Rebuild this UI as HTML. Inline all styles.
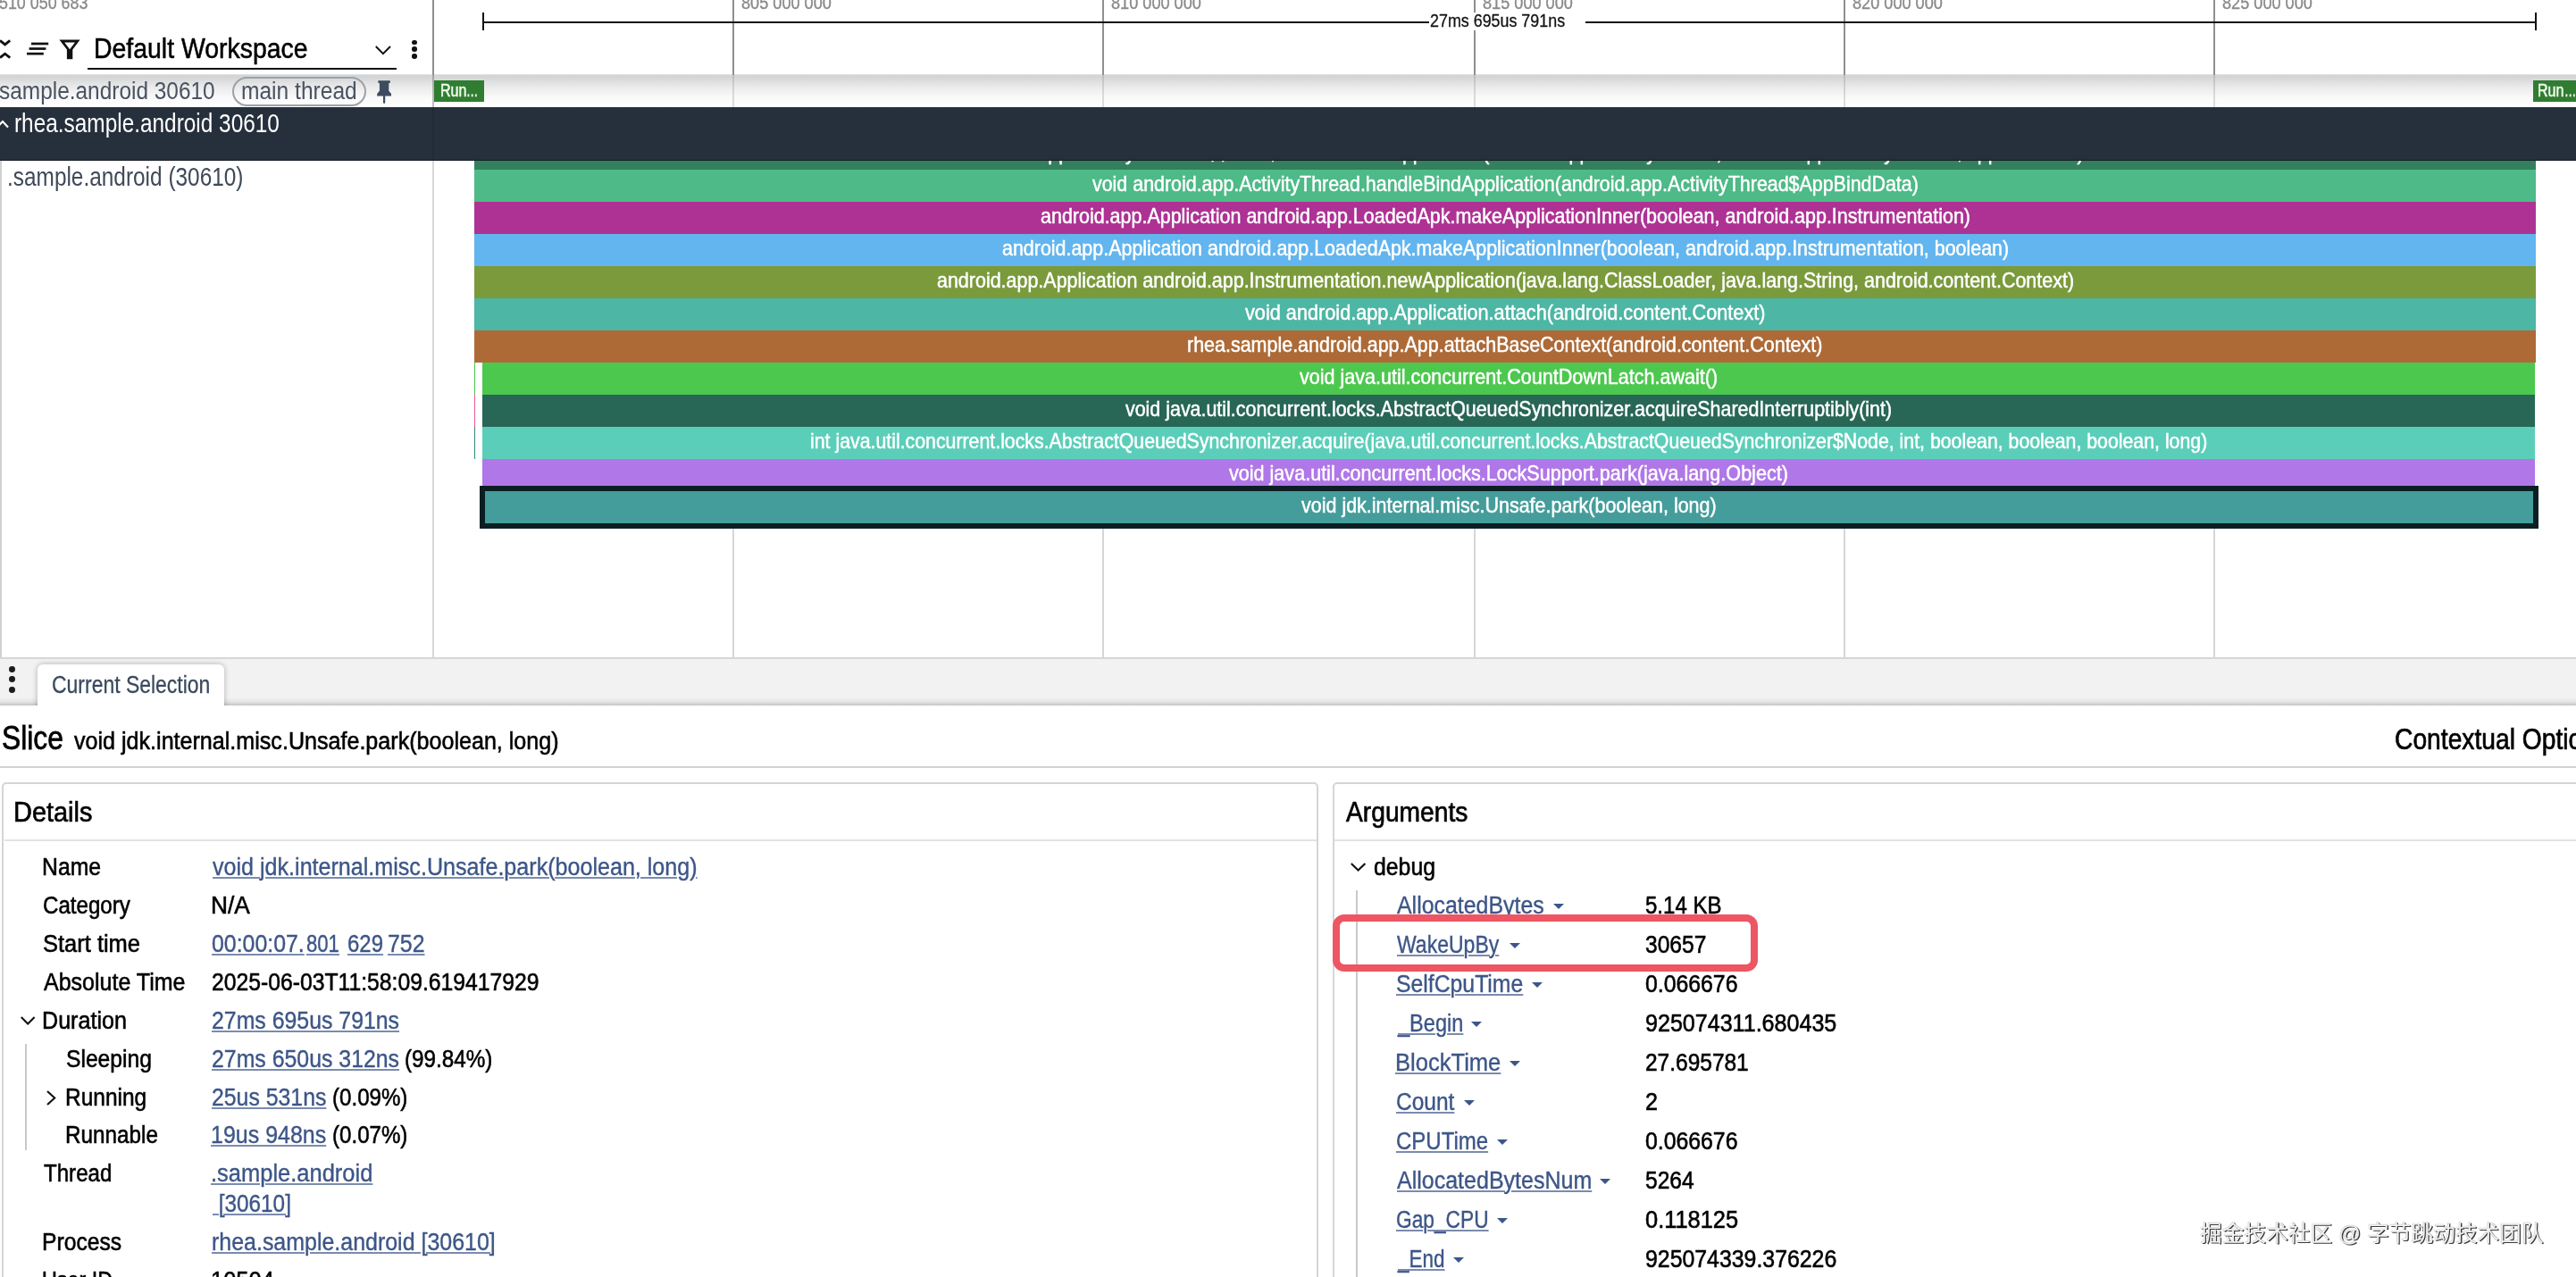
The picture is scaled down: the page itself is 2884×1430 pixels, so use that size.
<!DOCTYPE html>
<html lang="en">
<head>
<meta charset="utf-8">
<title>Perfetto UI - Slice details</title>
<style>
html,body{margin:0;padding:0;background:#fff;}
body{width:2884px;height:1430px;position:relative;overflow:hidden;font-family:"Liberation Sans",sans-serif;}
#page{position:absolute;left:0;top:0;width:2884px;height:1430px;overflow:hidden;will-change:transform;}
.t{position:absolute;white-space:pre;line-height:1;transform-origin:0 0;font-family:"Liberation Sans",sans-serif;z-index:2;}
.u{text-decoration:underline;text-decoration-thickness:1.7px;text-underline-offset:2.3px;text-decoration-color:#7b8bad;}
.z1{z-index:1}.z2{z-index:2}.z3{z-index:6}.z5{z-index:9}
.b{position:absolute;}
.s{position:absolute;z-index:1;}
.grid{position:absolute;width:2px;z-index:0;}
.dd{position:absolute;width:0;height:0;border-left:6px solid transparent;border-right:6px solid transparent;border-top:6.6px solid #3d5688;z-index:6;}
.dd.z5{z-index:9}
svg{position:absolute;overflow:visible;}
</style>
</head>
<body>
<div id="page">

<!-- ===== time axis gridlines (top ruler part) ===== -->
<div class="grid" style="left:820px;top:0;height:84px;background:#8f8f8f;z-index:2"></div>
<div class="grid" style="left:1234px;top:0;height:84px;background:#8f8f8f;z-index:2"></div>
<div class="grid" style="left:1650px;top:0;height:84px;background:#8f8f8f;z-index:2"></div>
<div class="grid" style="left:2064px;top:0;height:84px;background:#8f8f8f;z-index:2"></div>
<div class="grid" style="left:2478px;top:0;height:84px;background:#8f8f8f;z-index:2"></div>
<!-- gridlines in track area -->
<div class="grid" style="left:820px;top:180px;height:556px;background:#d6d6d6"></div>
<div class="grid" style="left:1234px;top:180px;height:556px;background:#d6d6d6"></div>
<div class="grid" style="left:1650px;top:180px;height:556px;background:#d6d6d6"></div>
<div class="grid" style="left:2064px;top:180px;height:556px;background:#d6d6d6"></div>
<div class="grid" style="left:2478px;top:180px;height:556px;background:#d6d6d6"></div>

<!-- panel separator -->
<div class="b" style="left:484px;top:0;width:2px;height:83.5px;background:#8e8e8e;z-index:2"></div>
<div class="b" style="left:484px;top:180px;width:2px;height:556px;background:#d7d7d7;z-index:1"></div>

<!-- ===== selection span ruler ===== -->
<div class="b" style="left:541px;top:23.5px;width:2298px;height:2px;background:#111;z-index:2"></div>
<div class="b" style="left:540px;top:14px;width:2px;height:19.5px;background:#111;z-index:2"></div>
<div class="b" style="left:2838px;top:14px;width:2px;height:19.5px;background:#111;z-index:2"></div>
<div class="b" style="left:1600px;top:13.6px;width:175px;height:20.4px;background:#fff;z-index:3"></div>

<!-- ===== toolbar icons ===== -->
<svg style="left:-2px;top:43px;z-index:2" width="16" height="24" viewBox="0 0 16 24">
  <path d="M2 2.4 L7.6 6.9 L13.2 2.4" fill="none" stroke="#111" stroke-width="2.8"/>
  <path d="M2 21.6 L7.6 17.2 L13.2 21.6" fill="none" stroke="#111" stroke-width="2.8"/>
</svg>
<svg style="left:29px;top:46px;z-index:2" width="27" height="17" viewBox="0 0 27 17">
  <rect x="6" y="1.6" width="19.2" height="2.7" fill="#111"/>
  <rect x="3.6" y="7.2" width="18.8" height="2.7" fill="#111"/>
  <rect x="1" y="12.8" width="18.8" height="2.7" fill="#111"/>
</svg>
<svg style="left:66px;top:43.5px;z-index:2" width="24" height="23" viewBox="0 0 24 23">
  <path d="M0.4 0.5 H23.6 L15.3 11.6 V22.3 H8.9 V11.6 Z M6.2 3.4 L12.1 11.2 L18 3.4 Z" fill="#111" fill-rule="evenodd"/>
</svg>
<div class="b" style="left:98.2px;top:76px;width:346px;height:2.2px;background:#111;z-index:2"></div>
<svg style="left:420px;top:51px;z-index:2" width="18" height="11" viewBox="0 0 18 11">
  <path d="M0.8 1 L8.9 9.2 L17 1" fill="none" stroke="#111" stroke-width="2"/>
</svg>
<div class="b" style="left:461.4px;top:44.8px;width:5.6px;height:5.6px;border-radius:50%;background:#111;z-index:2"></div>
<div class="b" style="left:461.4px;top:52.4px;width:5.6px;height:5.6px;border-radius:50%;background:#111;z-index:2"></div>
<div class="b" style="left:461.4px;top:60.0px;width:5.6px;height:5.6px;border-radius:50%;background:#111;z-index:2"></div>

<!-- ===== pinned track row ===== -->
<div class="b" style="left:0;top:83px;width:2884px;height:37px;background:linear-gradient(#ececed 0px,#d2d4d6 1.2px,#d4d5d7 3px,#d7d8da 5px,#dfe0e1 9px,#e8e8e9 13px,#eeeeee 17px,#f3f3f3 21px,#f8f8f8 25px,#fbfbfb 29px,#fefefe 37px);z-index:1"></div>
<div class="b" style="left:484px;top:83.5px;width:2px;height:36.5px;background:rgba(100,100,100,.42);z-index:1"></div>
<div class="b" style="left:820px;top:84px;width:2px;height:36px;background:rgba(120,120,120,.24);z-index:1"></div>
<div class="b" style="left:1234px;top:84px;width:2px;height:36px;background:rgba(120,120,120,.24);z-index:1"></div>
<div class="b" style="left:1650px;top:84px;width:2px;height:36px;background:rgba(120,120,120,.24);z-index:1"></div>
<div class="b" style="left:2064px;top:84px;width:2px;height:36px;background:rgba(120,120,120,.24);z-index:1"></div>
<div class="b" style="left:2478px;top:84px;width:2px;height:36px;background:rgba(120,120,120,.24);z-index:1"></div>
<div class="b" style="left:260px;top:86px;width:146px;height:28.6px;border:2px solid #9da1a7;border-radius:17px;z-index:2"></div>
<svg style="left:421px;top:90px;z-index:2" width="18" height="27" viewBox="0 0 18 27">
  <path d="M2.4 0.3 H15.8 V2.9 H14.3 V11.8 L17 15 V17.4 H10.2 V25 L9.1 26.3 L8 25 V17.4 H1.2 V15 L3.9 11.8 V2.9 H2.4 Z" fill="#3e4b5f"/>
</svg>
<div class="b" style="left:486.2px;top:90.4px;width:55.4px;height:23.2px;background:#2f7d31;z-index:2"></div>
<div class="b" style="left:2836px;top:90.4px;width:48px;height:23.2px;background:#2f7d31;z-index:2"></div>

<!-- ===== process group header (dark) ===== -->
<div class="b" style="left:0;top:120px;width:2884px;height:59.6px;background:#262f3c;z-index:2"></div>
<div class="b" style="left:484px;top:120px;width:2px;height:59.6px;background:#222a36;z-index:2"></div>
<div class="b" style="left:0;top:178.8px;width:2884px;height:1.2px;background:#161c25;z-index:2"></div>
<svg style="left:-6px;top:134px;z-index:3" width="16" height="11" viewBox="0 0 16 11">
  <path d="M2 9.4 L9 2 L15 8.6" fill="none" stroke="#fff" stroke-width="2.2"/>
</svg>

<!-- ===== track shell left border ===== -->
<div class="b" style="left:0;top:180px;width:2px;height:556px;background:#d0d0d0;z-index:1"></div>

<!-- ===== slices ===== -->
<div class="s" style="left:531px;top:179px;width:2308px;height:11px;background:#33805c"></div>
<div class="s" style="left:531px;top:190px;width:2308px;height:36px;background:#4dba87"></div>
<div class="s" style="left:531px;top:226px;width:2308px;height:36px;background:#ad3294"></div>
<div class="s" style="left:531px;top:262px;width:2308px;height:36px;background:#62b5ee"></div>
<div class="s" style="left:531px;top:298px;width:2308px;height:36px;background:#7a9a3c"></div>
<div class="s" style="left:531px;top:334px;width:2308px;height:36px;background:#4db6a4"></div>
<div class="s" style="left:531px;top:370px;width:2308px;height:36px;background:#ad6a37"></div>
<div class="s" style="left:540px;top:406px;width:2298px;height:36px;background:#4dc84f"></div>
<div class="s" style="left:540px;top:442px;width:2298px;height:36px;background:#286655"></div>
<div class="s" style="left:540px;top:478px;width:2298px;height:36px;background:#5bceb9"></div>
<div class="s" style="left:540px;top:514px;width:2298px;height:36px;background:#b077e8"></div>

<div class="b" style="left:531px;top:406px;width:1.4px;height:36px;background:#4dc84f;z-index:1"></div>
<div class="b" style="left:531px;top:442px;width:1.4px;height:36px;background:#e85d9b;z-index:1"></div>
<div class="b" style="left:531px;top:478px;width:1.4px;height:36px;background:#2f8a78;z-index:1"></div>
<div class="b" style="left:537px;top:544px;width:2293px;height:36px;border:6px solid #0b1f23;background:#459d9b;z-index:1"></div>

<!-- ===== bottom drawer ===== -->
<div class="b" style="left:0;top:736px;width:2884px;height:54px;background:#f2f2f2;z-index:4"></div>
<div class="b" style="left:0;top:736px;width:2884px;height:2px;background:#d6d6d6;z-index:4"></div>
<div class="b" style="left:0;top:781px;width:2884px;height:9px;background:linear-gradient(#f1f1f1 0%,#ececec 30%,#e0e0e0 60%,#cfcfcf 85%,#c2c2c2 100%);z-index:4"></div>
<div class="b" style="left:0;top:790px;width:2884px;height:640px;background:#fff;z-index:4"></div>
<div class="b" style="left:0;top:738px;width:400px;height:52px;overflow:hidden;z-index:5"><div class="b" style="left:42px;top:5.6px;width:208.6px;height:60px;background:#fff;border-radius:6px 6px 0 0;box-shadow:0 0 6px rgba(0,0,0,.28)"></div></div>
<div class="b" style="left:10.4px;top:746px;width:6.8px;height:6.8px;border-radius:50%;background:#1c1c1c;z-index:5"></div>
<div class="b" style="left:10.4px;top:757.4px;width:6.8px;height:6.8px;border-radius:50%;background:#1c1c1c;z-index:5"></div>
<div class="b" style="left:10.4px;top:768.8px;width:6.8px;height:6.8px;border-radius:50%;background:#1c1c1c;z-index:5"></div>

<!-- header rule -->
<div class="b" style="left:0;top:858px;width:2884px;height:2px;background:#d2d2d2;z-index:5"></div>

<!-- details card -->
<div class="b" style="left:1.8px;top:875.8px;width:1470px;height:600px;border:2px solid #d5d5d5;border-radius:5px;z-index:5"></div>
<div class="b" style="left:4.8px;top:940.4px;width:1469px;height:1.8px;background:#e2e2e2;z-index:5"></div>
<!-- arguments card -->
<div class="b" style="left:1492.4px;top:875.8px;width:1500px;height:600px;border:2px solid #d5d5d5;border-radius:5px;z-index:5"></div>
<div class="b" style="left:1494.4px;top:940.4px;width:1400px;height:1.8px;background:#e2e2e2;z-index:5"></div>

<!-- tree guide lines -->
<div class="b" style="left:28px;top:1169px;width:2px;height:119px;background:#c9c9c9;z-index:5"></div>
<div class="b" style="left:1518.2px;top:997px;width:2px;height:440px;background:#c9c9c9;z-index:5"></div>

<!-- chevrons -->
<svg style="left:23px;top:1138px;z-index:6" width="17" height="10" viewBox="0 0 17 10">
  <path d="M0.8 0.9 L8.2 8.4 L15.6 0.9" fill="none" stroke="#111" stroke-width="2.1"/>
</svg>
<svg style="left:52.4px;top:1221.4px;z-index:6" width="11" height="17" viewBox="0 0 11 17">
  <path d="M1 0.9 L9.2 8.4 L1 15.9" fill="none" stroke="#111" stroke-width="2.1"/>
</svg>
<svg style="left:1512px;top:966px;z-index:6" width="18" height="10" viewBox="0 0 18 10">
  <path d="M0.8 0.9 L8.6 8.6 L16.4 0.9" fill="none" stroke="#111" stroke-width="2.1"/>
</svg>

<!-- red highlight annotation -->
<div class="b" style="left:1492px;top:1024px;width:460px;height:48px;border:8px solid #ed5662;border-radius:13px;z-index:9"></div>

<i class="dd " style="left:1739.2px;top:1012.0px"></i>
<i class="dd " style="left:1689.5px;top:1056.0px"></i>
<i class="dd " style="left:1715.3px;top:1100.0px"></i>
<i class="dd " style="left:1647.3px;top:1144.0px"></i>
<i class="dd " style="left:1690.4px;top:1188.0px"></i>
<i class="dd " style="left:1639.2px;top:1232.0px"></i>
<i class="dd " style="left:1676.2px;top:1276.0px"></i>
<i class="dd " style="left:1791.4px;top:1320.0px"></i>
<i class="dd " style="left:1676.2px;top:1364.0px"></i>
<i class="dd " style="left:1626.5px;top:1408.0px"></i>


<!-- watermark -->
<span class="t z5" style="left:2463px;top:1369.5px;font-size:24.6px;font-family:'Liberation Sans','Noto Sans CJK SC',sans-serif;color:#f1f1f1;text-shadow:1.3px 1.3px 0.6px #3c3c3c,0 0 1px #777;letter-spacing:0.1px">掘金技术社区 @ 字节跳动技术团队</span>

<span class="t " style="left:-1.0px;top:-7.0px;font-size:20.5px;color:#8a8a8a;transform:scaleX(0.8715);-webkit-text-stroke:0.35px #8a8a8a;">510 050 683</span>
<span class="t " style="left:830.3px;top:-7.0px;font-size:20.5px;color:#8a8a8a;transform:scaleX(0.8847);-webkit-text-stroke:0.35px #8a8a8a;">805 000 000</span>
<span class="t " style="left:1244.3px;top:-7.0px;font-size:20.5px;color:#8a8a8a;transform:scaleX(0.8847);-webkit-text-stroke:0.35px #8a8a8a;">810 000 000</span>
<span class="t " style="left:1660.3px;top:-7.0px;font-size:20.5px;color:#8a8a8a;transform:scaleX(0.8847);-webkit-text-stroke:0.35px #8a8a8a;">815 000 000</span>
<span class="t " style="left:2074.3px;top:-7.0px;font-size:20.5px;color:#8a8a8a;transform:scaleX(0.8847);-webkit-text-stroke:0.35px #8a8a8a;">820 000 000</span>
<span class="t " style="left:2488.3px;top:-7.0px;font-size:20.5px;color:#8a8a8a;transform:scaleX(0.8847);-webkit-text-stroke:0.35px #8a8a8a;">825 000 000</span>
<span class="t z3" style="left:1601.1px;top:12.5px;font-size:20.5px;color:#111;transform:scaleX(0.8722);-webkit-text-stroke:0.3px #111;">27ms 695us 791ns</span>
<span class="t " style="left:104.8px;top:38.4px;font-size:32.2px;color:#000;transform:scaleX(0.8829);-webkit-text-stroke:0.55px #000;">Default Workspace</span>
<span class="t " style="left:-1.0px;top:87.4px;font-size:28.4px;color:#4a5361;transform:scaleX(0.8602);">sample.android 30610</span>
<span class="t " style="left:270.4px;top:87.1px;font-size:28.4px;color:#4a5361;transform:scaleX(0.8652);">main thread</span>
<span class="t " style="left:493.1px;top:90.6px;font-size:20.5px;color:#f0f8ea;transform:scaleX(0.7844);-webkit-text-stroke:0.6px #f0f8ea;">Run</span>
<span class="t " style="left:522.4px;top:90.6px;font-size:20.5px;color:#f0f8ea;transform:scaleX(0.6438);-webkit-text-stroke:0.6px #f0f8ea;">…</span>
<span class="t " style="left:2841.2px;top:90.6px;font-size:20.5px;color:#f0f8ea;transform:scaleX(0.7844);-webkit-text-stroke:0.6px #f0f8ea;">Run</span>
<span class="t " style="left:2870.8px;top:90.6px;font-size:20.5px;color:#f0f8ea;transform:scaleX(0.6438);-webkit-text-stroke:0.6px #f0f8ea;">…</span>
<span class="t " style="left:16.0px;top:122.2px;font-size:30.4px;color:#fff;transform:scaleX(0.8025);">rhea.sample.android 30610</span>
<span class="t " style="left:8.0px;top:182.2px;font-size:30.4px;color:#3f4958;transform:scaleX(0.8029);">.sample.android (30610)</span>
<span class="t z2" style="left:1222.9px;top:195.3px;font-size:23.2px;color:#fff;transform:scaleX(0.9234);-webkit-text-stroke:0.5px #fff;">void android.app.ActivityThread.handleBindApplication(android.app.ActivityThread$AppBindData)</span>
<span class="t z2" style="left:1164.8px;top:231.3px;font-size:23.2px;color:#fff;transform:scaleX(0.9261);-webkit-text-stroke:0.5px #fff;">android.app.Application android.app.LoadedApk.makeApplicationInner(boolean, android.app.Instrumentation)</span>
<span class="t z2" style="left:1121.8px;top:267.3px;font-size:23.2px;color:#fff;transform:scaleX(0.9243);-webkit-text-stroke:0.5px #fff;">android.app.Application android.app.LoadedApk.makeApplicationInner(boolean, android.app.Instrumentation, boolean)</span>
<span class="t z2" style="left:1048.8px;top:303.3px;font-size:23.2px;color:#fff;transform:scaleX(0.9256);-webkit-text-stroke:0.5px #fff;">android.app.Application android.app.Instrumentation.newApplication(java.lang.ClassLoader, java.lang.String, android.content.Context)</span>
<span class="t z2" style="left:1394.1px;top:339.3px;font-size:23.2px;color:#fff;transform:scaleX(0.9356);-webkit-text-stroke:0.5px #fff;">void android.app.Application.attach(android.content.Context)</span>
<span class="t z2" style="left:1329.2px;top:375.3px;font-size:23.2px;color:#fff;transform:scaleX(0.9260);-webkit-text-stroke:0.5px #fff;">rhea.sample.android.app.App.attachBaseContext(android.content.Context)</span>
<span class="t z2" style="left:1455.3px;top:411.3px;font-size:23.2px;color:#fff;transform:scaleX(0.9288);-webkit-text-stroke:0.5px #fff;">void java.util.concurrent.CountDownLatch.await()</span>
<span class="t z2" style="left:1260.3px;top:447.3px;font-size:23.2px;color:#fff;transform:scaleX(0.9234);-webkit-text-stroke:0.5px #fff;">void java.util.concurrent.locks.AbstractQueuedSynchronizer.acquireSharedInterruptibly(int)</span>
<span class="t z2" style="left:906.8px;top:483.3px;font-size:23.2px;color:#fff;transform:scaleX(0.9187);-webkit-text-stroke:0.5px #fff;">int java.util.concurrent.locks.AbstractQueuedSynchronizer.acquire(java.util.concurrent.locks.AbstractQueuedSynchronizer$Node, int, boolean, boolean, boolean, long)</span>
<span class="t z2" style="left:1376.4px;top:519.3px;font-size:23.2px;color:#fff;transform:scaleX(0.9303);-webkit-text-stroke:0.5px #fff;">void java.util.concurrent.locks.LockSupport.park(java.lang.Object)</span>
<span class="t z2" style="left:1457.3px;top:555.3px;font-size:23.2px;color:#fff;transform:scaleX(0.9268);-webkit-text-stroke:0.5px #fff;">void jdk.internal.misc.Unsafe.park(boolean, long)</span>
<span class="t z1" style="left:1038.5px;top:160.3px;font-size:23.2px;color:#fff;transform:scaleX(0.9216);-webkit-text-stroke:0.5px #fff;">void android.app.ActivityThread.-$$Nest$mhandleBindApplication(android.app.ActivityThread, android.app.ActivityThread$AppBindData)</span>
<span class="t z3" style="left:57.8px;top:752.3px;font-size:28.4px;color:#3a4a5e;transform:scaleX(0.8086);-webkit-text-stroke:0.3px #3a4a5e;">Current Selection</span>
<span class="t z3" style="left:1.9px;top:807.5px;font-size:37px;color:#000;transform:scaleX(0.8593);-webkit-text-stroke:0.78px #000;">Slice</span>
<span class="t z3" style="left:83.0px;top:814.9px;font-size:28.4px;color:#000;transform:scaleX(0.8839);-webkit-text-stroke:0.60px #000;">void jdk.internal.misc.Unsafe.park(boolean, long)</span>
<span class="t z3" style="left:2681.0px;top:811.8px;font-size:32.5px;color:#000;transform:scaleX(0.8686);-webkit-text-stroke:0.68px #000;">Contextual Options</span>
<span class="t z3" style="left:14.8px;top:893.7px;font-size:31.7px;color:#000;transform:scaleX(0.9126);-webkit-text-stroke:0.67px #000;">Details</span>
<span class="t z3" style="left:1506.8px;top:893.7px;font-size:31.7px;color:#000;transform:scaleX(0.8905);-webkit-text-stroke:0.67px #000;">Arguments</span>
<span class="t z3" style="left:47.0px;top:955.9px;font-size:28.4px;color:#000;transform:scaleX(0.8719);-webkit-text-stroke:0.60px #000;">Name</span>
<span class="t u z3" style="left:237.7px;top:955.9px;font-size:28.4px;color:#3d5688;transform:scaleX(0.8839);-webkit-text-stroke:0.4px #3d5688;">void jdk.internal.misc.Unsafe.park(boolean, long)</span>
<span class="t z3" style="left:47.9px;top:998.8px;font-size:28.4px;color:#000;transform:scaleX(0.8495);-webkit-text-stroke:0.60px #000;">Category</span>
<span class="t z3" style="left:235.8px;top:998.8px;font-size:28.4px;color:#000;transform:scaleX(0.9253);-webkit-text-stroke:0.60px #000;">N/A</span>
<span class="t z3" style="left:47.8px;top:1041.7px;font-size:28.4px;color:#000;transform:scaleX(0.8973);-webkit-text-stroke:0.60px #000;">Start time</span>
<span class="t u z3" style="left:236.9px;top:1041.7px;font-size:28.4px;color:#3d5688;transform:scaleX(0.8761);-webkit-text-stroke:0.4px #3d5688;">00:00:07.</span>
<span class="t u z3" style="left:343.1px;top:1041.7px;font-size:28.4px;color:#3d5688;transform:scaleX(0.7789);-webkit-text-stroke:0.4px #3d5688;">801</span>
<span class="t u z3" style="left:388.7px;top:1041.7px;font-size:28.4px;color:#3d5688;transform:scaleX(0.8447);-webkit-text-stroke:0.4px #3d5688;">629</span>
<span class="t u z3" style="left:433.5px;top:1041.7px;font-size:28.4px;color:#3d5688;transform:scaleX(0.8754);-webkit-text-stroke:0.4px #3d5688;">752</span>
<span class="t z3" style="left:48.7px;top:1084.7px;font-size:28.4px;color:#000;transform:scaleX(0.8808);-webkit-text-stroke:0.60px #000;">Absolute Time</span>
<span class="t z3" style="left:236.8px;top:1084.7px;font-size:28.4px;color:#000;transform:scaleX(0.8708);-webkit-text-stroke:0.60px #000;">2025-06-03T11:58:09.619417929</span>
<span class="t z3" style="left:46.9px;top:1127.6px;font-size:28.4px;color:#000;transform:scaleX(0.8848);-webkit-text-stroke:0.60px #000;">Duration</span>
<span class="t u z3" style="left:236.8px;top:1127.6px;font-size:28.4px;color:#3d5688;transform:scaleX(0.8755);-webkit-text-stroke:0.4px #3d5688;">27ms 695us 791ns</span>
<span class="t z3" style="left:73.6px;top:1170.6px;font-size:28.4px;color:#000;transform:scaleX(0.8681);-webkit-text-stroke:0.60px #000;">Sleeping</span>
<span class="t u z3" style="left:236.8px;top:1170.6px;font-size:28.4px;color:#3d5688;transform:scaleX(0.8755);-webkit-text-stroke:0.4px #3d5688;">27ms 650us 312ns</span>
<span class="t z3" style="left:453.1px;top:1170.6px;font-size:28.4px;color:#000;transform:scaleX(0.8541);-webkit-text-stroke:0.60px #000;">(99.84%)</span>
<span class="t z3" style="left:72.8px;top:1213.5px;font-size:28.4px;color:#000;transform:scaleX(0.8620);-webkit-text-stroke:0.60px #000;">Running</span>
<span class="t u z3" style="left:236.8px;top:1213.5px;font-size:28.4px;color:#3d5688;transform:scaleX(0.8743);-webkit-text-stroke:0.4px #3d5688;">25us 531ns</span>
<span class="t z3" style="left:371.9px;top:1213.5px;font-size:28.4px;color:#000;transform:scaleX(0.8489);-webkit-text-stroke:0.60px #000;">(0.09%)</span>
<span class="t z3" style="left:72.8px;top:1256.4px;font-size:28.4px;color:#000;transform:scaleX(0.8547);-webkit-text-stroke:0.60px #000;">Runnable</span>
<span class="t u z3" style="left:235.9px;top:1256.4px;font-size:28.4px;color:#3d5688;transform:scaleX(0.8803);-webkit-text-stroke:0.4px #3d5688;">19us 948ns</span>
<span class="t z3" style="left:371.9px;top:1256.4px;font-size:28.4px;color:#000;transform:scaleX(0.8489);-webkit-text-stroke:0.60px #000;">(0.07%)</span>
<span class="t z3" style="left:48.7px;top:1299.4px;font-size:28.4px;color:#000;transform:scaleX(0.8484);-webkit-text-stroke:0.60px #000;">Thread</span>
<span class="t u z3" style="left:235.9px;top:1299.4px;font-size:28.4px;color:#3d5688;transform:scaleX(0.8975);-webkit-text-stroke:0.4px #3d5688;">.sample.android</span>
<span class="t u z3" style="left:237.7px;top:1333.0px;font-size:28.4px;color:#3d5688;transform:scaleX(0.8566);-webkit-text-stroke:0.4px #3d5688;"> [30610]</span>
<span class="t z3" style="left:47.0px;top:1375.9px;font-size:28.4px;color:#000;transform:scaleX(0.8689);-webkit-text-stroke:0.60px #000;">Process</span>
<span class="t u z3" style="left:236.8px;top:1375.9px;font-size:28.4px;color:#3d5688;transform:scaleX(0.8791);-webkit-text-stroke:0.4px #3d5688;">rhea.sample.android [30610]</span>
<span class="t z3" style="left:47.1px;top:1418.9px;font-size:28.4px;color:#000;transform:scaleX(0.8216);-webkit-text-stroke:0.60px #000;">User ID</span>
<span class="t z3" style="left:235.9px;top:1418.9px;font-size:28.4px;color:#000;transform:scaleX(0.8968);-webkit-text-stroke:0.60px #000;">10504</span>
<span class="t z3" style="left:1537.5px;top:956.1px;font-size:28.4px;color:#000;transform:scaleX(0.8745);-webkit-text-stroke:0.60px #000;">debug</span>
<span class="t u  z3" style="left:1564.2px;top:999.1px;font-size:28.4px;color:#3d5688;transform:scaleX(0.8774);-webkit-text-stroke:0.4px #3d5688;">AllocatedBytes</span>
<span class="t z3" style="left:1842.0px;top:999.1px;font-size:28.4px;color:#000;transform:scaleX(0.8458);-webkit-text-stroke:0.60px #000;">5.14 KB</span>
<span class="t u  z3" style="left:1564.2px;top:1043.1px;font-size:28.4px;color:#3d5688;transform:scaleX(0.8106);-webkit-text-stroke:0.4px #3d5688;">WakeUpBy</span>
<span class="t z3" style="left:1841.9px;top:1043.1px;font-size:28.4px;color:#000;transform:scaleX(0.8658);-webkit-text-stroke:0.60px #000;">30657</span>
<span class="t u  z3" style="left:1563.3px;top:1087.1px;font-size:28.4px;color:#3d5688;transform:scaleX(0.8726);-webkit-text-stroke:0.4px #3d5688;">SelfCpuTime</span>
<span class="t z3" style="left:1841.9px;top:1087.1px;font-size:28.4px;color:#000;transform:scaleX(0.8737);-webkit-text-stroke:0.60px #000;">0.066676</span>
<span class="t u  z3" style="left:1565.0px;top:1131.1px;font-size:28.4px;color:#3d5688;transform:scaleX(0.8298);-webkit-text-stroke:0.4px #3d5688;">_Begin</span>
<span class="t z3" style="left:1841.9px;top:1131.1px;font-size:28.4px;color:#000;transform:scaleX(0.8832);-webkit-text-stroke:0.60px #000;">925074311.680435</span>
<span class="t u  z3" style="left:1562.4px;top:1175.1px;font-size:28.4px;color:#3d5688;transform:scaleX(0.9000);-webkit-text-stroke:0.4px #3d5688;">BlockTime</span>
<span class="t z3" style="left:1841.9px;top:1175.1px;font-size:28.4px;color:#000;transform:scaleX(0.8624);-webkit-text-stroke:0.60px #000;">27.695781</span>
<span class="t u  z3" style="left:1563.3px;top:1219.1px;font-size:28.4px;color:#3d5688;transform:scaleX(0.8628);-webkit-text-stroke:0.4px #3d5688;">Count</span>
<span class="t z3" style="left:1841.9px;top:1219.1px;font-size:28.4px;color:#000;transform:scaleX(0.8857);-webkit-text-stroke:0.60px #000;">2</span>
<span class="t u  z3" style="left:1563.4px;top:1263.1px;font-size:28.4px;color:#3d5688;transform:scaleX(0.8453);-webkit-text-stroke:0.4px #3d5688;">CPUTime</span>
<span class="t z3" style="left:1841.9px;top:1263.1px;font-size:28.4px;color:#000;transform:scaleX(0.8737);-webkit-text-stroke:0.60px #000;">0.066676</span>
<span class="t u  z3" style="left:1564.2px;top:1307.1px;font-size:28.4px;color:#3d5688;transform:scaleX(0.8810);-webkit-text-stroke:0.4px #3d5688;">AllocatedBytesNum</span>
<span class="t z3" style="left:1841.9px;top:1307.1px;font-size:28.4px;color:#000;transform:scaleX(0.8653);-webkit-text-stroke:0.60px #000;">5264</span>
<span class="t u  z3" style="left:1563.4px;top:1351.1px;font-size:28.4px;color:#3d5688;transform:scaleX(0.8007);-webkit-text-stroke:0.4px #3d5688;">Gap_CPU</span>
<span class="t z3" style="left:1841.9px;top:1351.1px;font-size:28.4px;color:#000;transform:scaleX(0.8951);-webkit-text-stroke:0.60px #000;">0.118125</span>
<span class="t u  z3" style="left:1565.0px;top:1395.1px;font-size:28.4px;color:#3d5688;transform:scaleX(0.7922);-webkit-text-stroke:0.4px #3d5688;">_End</span>
<span class="t z3" style="left:1841.9px;top:1395.1px;font-size:28.4px;color:#000;transform:scaleX(0.8755);-webkit-text-stroke:0.60px #000;">925074339.376226</span>
</div>
</body>
</html>
